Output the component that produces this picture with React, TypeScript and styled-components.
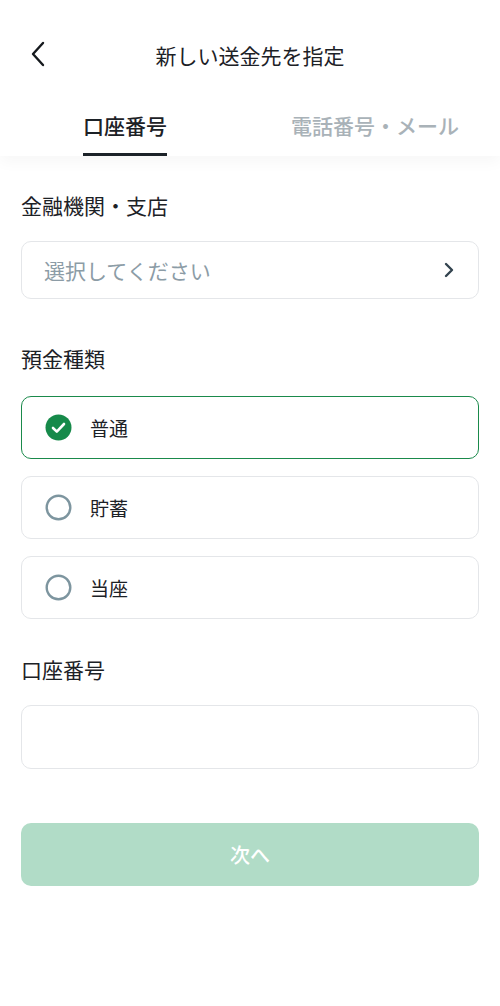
import React, { useState } from 'react'
import styled, { createGlobalStyle } from 'styled-components'

const GlobalStyle = createGlobalStyle`
    html, body {
        margin: 0;
        padding: 0;
        background: #ffffff;
    }
    body {
        font-family: "Noto Sans CJK JP", "Noto Sans", sans-serif;
        color: #1f2429;
    }
    * { box-sizing: border-box; }
`

const Page = styled.div`
    width: 500px;
    min-height: 1006px;
    background: #fff;
`

const Header = styled.header`
    position: relative;
    background: #fff;
    box-shadow: 0 6px 14px rgba(0, 0, 0, 0.035);
    z-index: 1;
`

const TopBar = styled.div`
    height: 100px;
    display: flex;
    align-items: center;
    justify-content: center;
    position: relative;
    padding-top: 10px;
`

const BackButton = styled.button`
    position: absolute;
    left: 24px;
    top: 36px;
    width: 28px;
    height: 36px;
    border: none;
    background: none;
    padding: 0;
    display: flex;
    align-items: center;
    justify-content: center;
    color: #15191d;
`

const Title = styled.h1`
    margin: 0;
    font-size: 21px;
    font-weight: 400;
    color: #1c2126;
`

const Tabs = styled.div`
    display: grid;
    grid-template-columns: 1fr 1fr;
    height: 56px;
`

const Tab = styled.button`
    border: none;
    background: none;
    padding: 0;
    display: flex;
    justify-content: center;
    align-items: stretch;
    font-family: inherit;
    cursor: pointer;
`

const TabLabel = styled.span<{ $active?: boolean }>`
    display: flex;
    align-items: center;
    font-size: 21px;
    font-weight: 500;
    color: ${({ $active }) => ($active ? '#1c2126' : '#a9b2b8')};
    border-bottom: 3px solid ${({ $active }) => ($active ? '#1c2329' : 'transparent')};
    padding-bottom: 3px;
`

const Content = styled.main`
    padding: 0 21px;
`

const Section = styled.section<{ $top: number }>`
    margin-top: ${({ $top }) => $top}px;
`

const Label = styled.div<{ $gap?: number }>`
    font-size: 21px;
    line-height: 28px;
    font-weight: 400;
    color: #1c2126;
    margin-bottom: ${({ $gap }) => $gap ?? 22}px;
`

const SelectBox = styled.div`
    height: 58px;
    border: 1.5px solid #e4e6e9;
    border-radius: 10px;
    display: flex;
    align-items: center;
    justify-content: space-between;
    padding: 0 22px 0 22px;
`

const Placeholder = styled.span`
    font-size: 21px;
    color: #8c9ca6;
`

const Options = styled.div`
    display: flex;
    flex-direction: column;
    gap: 17px;
`

const Option = styled.label<{ $selected?: boolean }>`
    height: 63px;
    border: 1.5px solid ${({ $selected }) => ($selected ? '#1a8a4b' : '#e4e6e9')};
    border-radius: 10px;
    display: flex;
    align-items: center;
    gap: 18px;
    padding-left: 23px;
    cursor: pointer;
`

const OptionText = styled.span`
    font-size: 19px;
    color: #1c2126;
`

const TextInput = styled.input`
    display: block;
    width: 100%;
    height: 64px;
    border: 1.5px solid #e4e6e9;
    border-radius: 10px;
    outline: none;
    font-size: 20px;
    padding: 0 22px;
    font-family: inherit;
`

const NextButton = styled.button`
    display: block;
    width: 100%;
    height: 63px;
    margin-top: 54px;
    border: none;
    border-radius: 10px;
    background: #b1dcc7;
    color: #ffffff;
    font-family: inherit;
    font-size: 20px;
    font-weight: 500;
`

const Radio = ({ checked }: { checked: boolean }) =>
    checked ? (
        <svg width="27" height="27" viewBox="0 0 27 27">
            <circle cx="13.5" cy="13.5" r="13" fill="#168a4a" />
            <path d="M8 14 L11.8 17.6 L19 10" fill="none" stroke="#fff" strokeWidth="2.6" strokeLinecap="round" strokeLinejoin="round" />
        </svg>
    ) : (
        <svg width="27" height="27" viewBox="0 0 27 27">
            <circle cx="13.5" cy="13.5" r="11.8" fill="none" stroke="#7d959f" strokeWidth="2.4" />
        </svg>
    )

const types = ['普通', '貯蓄', '当座']

const App = () => {
    const [selected, setSelected] = useState('普通')
    return (
        <Page>
            <GlobalStyle />
            <Header>
                <TopBar>
                    <BackButton aria-label="戻る">
                        <svg width="18" height="26" viewBox="0 0 18 26">
                            <path d="M14 2 L4 13 L14 24" fill="none" stroke="currentColor" strokeWidth="2.4" strokeLinecap="round" strokeLinejoin="round" />
                        </svg>
                    </BackButton>
                    <Title>新しい送金先を指定</Title>
                </TopBar>
                <Tabs>
                    <Tab><TabLabel $active>口座番号</TabLabel></Tab>
                    <Tab><TabLabel>電話番号・メール</TabLabel></Tab>
                </Tabs>
            </Header>
            <Content>
                <Section $top={35}>
                    <Label>金融機関・支店</Label>
                    <SelectBox>
                        <Placeholder>選択してください</Placeholder>
                        <svg width="14" height="18" viewBox="0 0 14 18">
                            <path d="M4 3 L10 9 L4 15" fill="none" stroke="#33444f" strokeWidth="2.4" strokeLinecap="round" strokeLinejoin="round" />
                        </svg>
                    </SelectBox>
                </Section>
                <Section $top={45}>
                    <Label $gap={24}>預金種類</Label>
                    <Options>
                        {types.map((t) => (
                            <Option key={t} $selected={selected === t} onClick={() => setSelected(t)}>
                                <Radio checked={selected === t} />
                                <OptionText>{t}</OptionText>
                            </Option>
                        ))}
                    </Options>
                </Section>
                <Section $top={36}>
                    <Label>口座番号</Label>
                    <TextInput />
                </Section>
                <NextButton>次へ</NextButton>
            </Content>
        </Page>
    )
}

export default App
